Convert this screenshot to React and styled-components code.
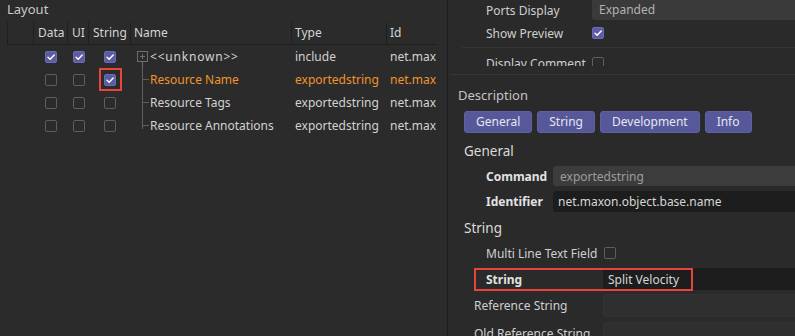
import React from 'react'
import styled, { createGlobalStyle } from 'styled-components'

const GlobalStyle = createGlobalStyle`
  html, body {
    margin: 0;
    padding: 0;
    background: #2b2b2b;
  }
  body {
    font-family: "Noto Sans", "Open Sans", sans-serif;
    font-size: 12px;
    color: #d0d0d0;
  }
`

const Screen = styled.div`
  display: flex;
  width: 795px;
  height: 336px;
  overflow: hidden;
  background: #2b2b2b;
`

const LeftPanel = styled.div`
  width: 447px;
  flex-shrink: 0;
  border-right: 1px solid #1d1d1d;
`

const PanelTitle = styled.div`
  height: 22px;
  line-height: 18px;
  padding-left: 7px;
  font-size: 13px;
  color: #c8c8c8;
`

const Table = styled.div`
  margin-left: 7px;
  width: 430px;
  overflow: hidden;
  display: grid;
  grid-template-columns: 27px 34px 21px 42px 161px 95px 60px;
  grid-auto-rows: 23px;
`

const HeadCell = styled.div`
  height: 22px;
  line-height: 22px;
  padding-left: ${p => (p.$pad ? p.$pad : 3)}px;
  border-right: 1px solid #1f1f1f;
  border-bottom: 1px solid #1f1f1f;
  border-left: ${p => (p.$first ? '1px solid #1f1f1f' : 'none')};
  white-space: nowrap;
  overflow: hidden;
  color: #d4d4d4;
`

const Cell = styled.div`
  display: flex;
  align-items: center;
  justify-content: ${p => (p.$center ? 'center' : 'flex-start')};
  padding-left: ${p => (p.$center ? 0 : 3)}px;
  white-space: nowrap;
  overflow: hidden;
  color: ${p => (p.$active ? '#f0952c' : '#d2d2d2')};
`

const NameCell = styled(Cell)`
  padding-left: 0;
`

const Box = styled.span`
  width: 12px;
  height: 12px;
  flex-shrink: 0;
  box-sizing: border-box;
  border-radius: 2px;
  display: inline-flex;
  align-items: center;
  justify-content: center;
  background: ${p => (p.$checked ? '#5b5ca4' : 'transparent')};
  border: ${p => (p.$checked ? '1px solid #6b6cb4' : '1.5px solid #5e5e5e')};
`

const Highlight = styled.div`
  display: inline-flex;
  align-items: center;
  justify-content: center;
  width: 23px;
  height: 23px;
  box-sizing: border-box;
  border: 2px solid #e8443c;
`

const RightPanel = styled.div`
  flex: 1;
  overflow: hidden;
  background: #2a2a2a;
`

const PropsArea = styled.div`
  height: 66px;
  overflow: hidden;
  padding-left: 14px;
`

const PropRow = styled.div`
  display: grid;
  grid-template-columns: 106px 1fr;
  align-items: center;
  height: 20px;
  padding-left: 24px;
  margin-top: ${p => p.$top || 0}px;
  white-space: nowrap;
  color: #cfcfcf;
`

const SelectField = styled.div`
  height: 20px;
  line-height: 19px;
  padding-left: 7px;
  margin-right: -4px;
  background: #3a3a3a;
  border-radius: 0 0 3px 3px;
  color: #b2b2b2;
`

const Rule = styled.div`
  height: 1px;
  background: #363636;
  margin-top: ${p => p.$top || 0}px;
  margin-left: ${p => p.$left || 0}px;
`

const Description = styled.div`
  padding-left: 10px;
`

const DescTitle = styled.div`
  height: 20px;
  line-height: 20px;
  margin-top: 10px;
  font-size: 13px;
  color: #c4c4c4;
`

const Tabs = styled.div`
  display: flex;
  gap: 5px;
  margin-top: 6px;
  margin-left: 6px;
`

const Tab = styled.div`
  height: 22px;
  line-height: 20px;
  box-sizing: border-box;
  padding: 0 11px;
  border-radius: 3px;
  background: #56589a;
  border: 1px solid #5e60a4;
  color: #e6e6ee;
`

const GroupTitle = styled.div`
  height: 20px;
  line-height: 20px;
  margin-top: ${p => p.$top}px;
  margin-left: 6px;
  font-size: 13.5px;
  color: #dadada;
`

const FieldRow = styled.div`
  position: relative;
  display: grid;
  grid-template-columns: ${p => p.$label}px 1fr;
  align-items: center;
  height: ${p => p.$h || 20}px;
  margin-top: ${p => p.$top}px;
  margin-left: ${p => p.$indent}px;
`

const Label = styled.div`
  white-space: nowrap;
  font-weight: ${p => (p.$bold ? 700 : 400)};
  color: ${p => (p.$bold ? '#e2e2e2' : '#cfcfcf')};
`

const Field = styled.div`
  height: 100%;
  display: flex;
  align-items: center;
  padding-left: ${p => p.$pad || 7}px;
  margin-right: -4px;
  border-radius: 3px;
  background: ${p => p.$bg};
  color: ${p => p.$color || '#d6d6d6'};
  white-space: nowrap;
  box-sizing: border-box;
  border: ${p => (p.$outlined ? '1px solid #333' : 'none')};
`

const RowHighlight = styled.div`
  position: absolute;
  left: -12px;
  top: 0;
  width: 219px;
  height: 23px;
  box-sizing: border-box;
  border: 2px solid #e8443c;
  pointer-events: none;
`

const Check = ({ checked }) => (
  <Box $checked={checked}>
    {checked && (
      <svg width="10" height="10" viewBox="0 0 10 10">
        <polyline points="2,5.2 4.2,7.3 8.2,3" fill="none" stroke="#fff" strokeWidth="1.4" strokeLinecap="round" strokeLinejoin="round" />
      </svg>
    )}
  </Box>
)

const TreeGuide = ({ kind }) => (
  <svg width="19" height="23" viewBox="0 0 19 23" style={{ flexShrink: 0 }}>
    {kind === 'root' && (
      <g stroke="#6e6e6e" strokeWidth="1" fill="none">
        <rect x="6.5" y="6.5" width="10" height="10" />
        <line x1="9" y1="11.5" x2="14" y2="11.5" />
        <line x1="11.5" y1="9" x2="11.5" y2="14" />
        <line x1="11.5" y1="16.5" x2="11.5" y2="23" />
      </g>
    )}
    {kind !== 'root' && (
      <g stroke="#5e5e5e" strokeWidth="1" fill="none">
        <line x1="11.5" y1="0" x2="11.5" y2={kind === 'last' ? 15 : 23} />
        <line x1="11.5" y1="11.5" x2="18" y2="11.5" />
      </g>
    )}
  </svg>
)

const rows = [
  { data: true, ui: true, str: true, name: '<<unknown>>', type: 'include', id: 'net.max', tree: 'root' },
  { data: false, ui: false, str: true, name: 'Resource Name', type: 'exportedstring', id: 'net.max', tree: 'mid', active: true, marked: true },
  { data: false, ui: false, str: false, name: 'Resource Tags', type: 'exportedstring', id: 'net.max', tree: 'mid' },
  { data: false, ui: false, str: false, name: 'Resource Annotations', type: 'exportedstring', id: 'net.max', tree: 'last' },
]

const App = () => (
  <>
    <GlobalStyle />
    <Screen>
      <LeftPanel>
        <PanelTitle>Layout</PanelTitle>
        <Table>
          <HeadCell $first />
          <HeadCell $pad={4}>Data</HeadCell>
          <HeadCell $pad={4}>UI</HeadCell>
          <HeadCell $pad={4}>String</HeadCell>
          <HeadCell>Name</HeadCell>
          <HeadCell>Type</HeadCell>
          <HeadCell>Id</HeadCell>
          {rows.map(r => (
            <React.Fragment key={r.name}>
              <Cell />
              <Cell $center><Check checked={r.data} /></Cell>
              <Cell $center><Check checked={r.ui} /></Cell>
              <Cell $center>
                {r.marked ? (
                  <Highlight><Check checked={r.str} /></Highlight>
                ) : (
                  <Check checked={r.str} />
                )}
              </Cell>
              <NameCell $active={r.active}>
                <TreeGuide kind={r.tree} />
                {r.tree === 'root' ? <span style={{ letterSpacing: '0.8px' }}>{r.name}</span> : r.name}
              </NameCell>
              <Cell $active={r.active}>{r.type}</Cell>
              <Cell $active={r.active}>{r.id}</Cell>
            </React.Fragment>
          ))}
        </Table>
      </LeftPanel>

      <RightPanel>
        <PropsArea>
          <PropRow>
            <span>Ports Display</span>
            <SelectField>Expanded</SelectField>
          </PropRow>
          <PropRow $top={3}>
            <span>Show Preview</span>
            <Check checked />
          </PropRow>
          <Rule $top={4} />
          <PropRow $top={5}>
            <span>Display Comment</span>
            <Check checked={false} />
          </PropRow>
        </PropsArea>
        <Rule $top={8} $left={2} />

        <Description>
          <DescTitle>Description</DescTitle>
          <Tabs>
            <Tab>General</Tab>
            <Tab>String</Tab>
            <Tab>Development</Tab>
            <Tab>Info</Tab>
          </Tabs>

          <GroupTitle $top={8}>General</GroupTitle>
          <FieldRow $label={67} $indent={28} $top={5}>
            <Label $bold>Command</Label>
            <Field $bg="#3c3c3c" $color="#9d9d9d">exportedstring</Field>
          </FieldRow>
          <FieldRow $label={67} $indent={28} $top={5} $h={21}>
            <Label $bold>Identifier</Label>
            <Field $bg="#1d1d1d" $pad={5}>net.maxon.object.base.name</Field>
          </FieldRow>

          <GroupTitle $top={6}>String</GroupTitle>
          <FieldRow $label={118} $indent={28} $top={5}>
            <Label>Multi Line Text Field</Label>
            <Check checked={false} />
          </FieldRow>
          <FieldRow $label={117} $indent={28} $top={5} $h={22}>
            <Label $bold>String</Label>
            <Field $bg="#1d1d1d" $pad={5}>Split Velocity</Field>
            <RowHighlight />
          </FieldRow>
          <FieldRow $label={129} $indent={16} $top={4} $h={23}>
            <Label>Reference String</Label>
            <Field $bg="#2f2f2f" $outlined />
          </FieldRow>
          <FieldRow $label={129} $indent={16} $top={5} $h={23}>
            <Label>Old Reference String</Label>
            <Field $bg="#2f2f2f" $outlined />
          </FieldRow>
        </Description>
      </RightPanel>
    </Screen>
  </>
)

export default App
